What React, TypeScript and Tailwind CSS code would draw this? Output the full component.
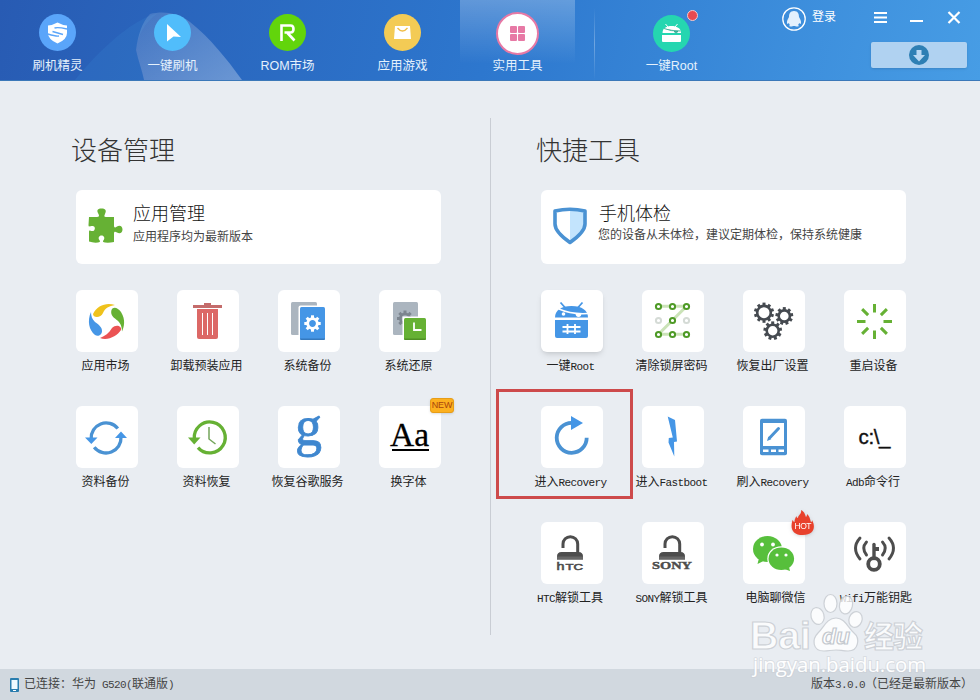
import type { ReactNode } from "react";

type Tool = {
  label: string;
  icon: ReactNode;
  shift?: string;
  raised?: boolean;
  extra?: ReactNode;
};

const BLUE = "#4596e6";
const STEEL = "#4a92d3";
const GREEN = "#66b134";
const DARK = "#4d4d4d";

// Latin runs are set on a 6px half-width grid next to the 12px CJK glyphs
const Mixed = ({ text }: { text: string }) => (
  <>
    {text.split(/([\x20-\x7e]+)/).map((part, i) =>
      i % 2 ? (
        <span key={i} className="font-['Liberation_Mono',monospace] text-[11px] tracking-[-0.6px] whitespace-pre">{part}</span>
      ) : (
        <span key={i}>{part}</span>
      )
    )}
  </>
);

const Gear = ({ cx, cy, r, w, color, teeth = 8 }: { cx: number; cy: number; r: number; w: number; color: string; teeth?: number }) => (
  <g transform={`translate(${cx} ${cy})`} fill={color}>
    <circle r={r} fill="none" stroke={color} strokeWidth={w} />
    {Array.from({ length: teeth }, (_, i) => (
      <rect key={i} x={-1.5} y={-r - w / 2 - 2} width={3} height={3} transform={`rotate(${(360 / teeth) * i})`} />
    ))}
  </g>
);

const Icon = ({ children }: { children: ReactNode }) => (
  <svg viewBox="0 0 62 62" className="block h-[62px] w-[62px] overflow-visible" fill="none">
    {children}
  </svg>
);

const Lock = ({ x }: { x: number }) => (
  <g transform={`translate(${x} 0)`}>
    <path d="M22 26v-4a7.3 7.3 0 0 1 14.7 0v9" stroke={DARK} strokeWidth="3" />
    <path d="M16 37.500v-3q0-4.500 4.500-4.500h17q4.500 0 4.500 4.500v3z" fill={DARK} />
    <path d="M16 34.500h26v3h-26z" fill="#666" />
  </g>
);

const deviceTools: Tool[] = [
  {
    label: "应用市场",
    icon: (
      <Icon>
        <path d="M39 15C31 12 21 15 17 24c0 4 8 4 10-1 2-5 6-7 12-8z" fill="#efc21c" />
        <path d="M35.500 20c1.500-4 6.500-2.500 9.500 2 5 8 3 15 1 19.500 0-7-3-10-7-13-3-2-4.500-5-3.500-8.500z" fill={GREEN} />
        <path d="M15 22c-4 9-2 18 4 23 3 2 7 0 7-4s-3-6-7-9c-3-3-4-6-4-10z" fill={BLUE} />
        <path d="M24 48c8 3 17-2 21-8 1-4-5-6-9-2-3 5-7 8-12 10z" fill="#eb5354" />
      </Icon>
    ),
  },
  {
    label: "卸载预装应用",
    icon: (
      <Icon>
        <path d="M16 15h11v-2h7v2h11v3h-29z" fill="#c46c6b" />
        <path d="M20 19h21v28q0 2-2 2h-17q-2 0-2-2z" fill="#dc6866" />
        <path d="M25.500 23v22M30.500 23v22M35.500 23v22" stroke="#fff" strokeWidth="1" />
      </Icon>
    ),
  },
  {
    label: "系统备份",
    icon: (
      <Icon>
        <rect x="13" y="12" width="26" height="33" rx="1.500" fill="#abb5bf" />
        <rect x="20.500" y="15.500" width="28" height="36" rx="2" fill="#fff" />
        <rect x="22" y="17" width="25" height="33" rx="1.500" fill={BLUE} />
        <path d="M22 48.500h25q0 1.500-1.500 1.500h-22q-1.500 0-1.500-1.500z" fill="#3579bd" />
        <Gear cx={34.5} cy={33.5} r={4.8} w={2.8} color="#fff" />
      </Icon>
    ),
  },
  {
    label: "系统还原",
    icon: (
      <Icon>
        <rect x="14" y="12" width="25" height="33" rx="1.500" fill="#abb5bf" />
        <Gear cx={26} cy={28.5} r={4.6} w={2.8} color="#7c858f" />
        <rect x="23.500" y="26.500" width="26" height="25" fill="#fff" />
        <rect x="25" y="28" width="22" height="22" rx="1.500" fill={GREEN} />
        <path d="M25 48.500h22q0 1.500-1.500 1.500h-19q-1.500 0-1.500-1.500z" fill="#4f8f25" />
        <path d="M35 32.500v7.500h7.500" stroke="#fff" strokeWidth="1.800" />
      </Icon>
    ),
  },
  {
    label: "资料备份",
    icon: (
      <Icon>
        <path d="M15.200 33a15 15 0 0 1 26.600-10.500M45 31a15 15 0 0 1-26.800 10.200" stroke={STEEL} strokeWidth="3.300" />
        <path d="M9 31.500h12.500l-6.200 6.500zM39 32h12l-6-6.500z" fill={BLUE} />
      </Icon>
    ),
  },
  {
    label: "资料恢复",
    icon: (
      <Icon>
        <path d="M17.300 33a15.500 15.500 0 1 1 3.700 8.600" stroke={GREEN} strokeWidth="3.300" />
        <path d="M11 31.500h12.500l-6.300 7z" fill={GREEN} />
        <path d="M32 21v12l6.500 5" stroke="#74a55b" strokeWidth="1.500" />
      </Icon>
    ),
  },
  {
    label: "恢复谷歌服务",
    icon: (
      <Icon>
        <text x="17" y="39" fontSize="56" textLength="27" lengthAdjust="spacingAndGlyphs" fill="#3f87cf" stroke="#3f87cf" strokeWidth="0.800" fontFamily="Liberation Serif, serif">g</text>
      </Icon>
    ),
  },
  {
    label: "换字体",
    icon: (
      <Icon>
        <text x="11" y="39.500" fontSize="34" textLength="39" lengthAdjust="spacingAndGlyphs" fill="#000" stroke="#000" strokeWidth="0.300" fontFamily="Liberation Serif, serif">Aa</text>
        <path d="M13 44h37" stroke="#000" strokeWidth="2" />
      </Icon>
    ),
    extra: (
      <span className="absolute -top-2 left-[51px] flex h-[15px] w-6 items-center justify-center rounded-[3px] border border-[#e79d17] bg-[#fcb01f] font-['Liberation_Sans',sans-serif] text-[9px] leading-none tracking-tight text-[#a8440c] shadow">
        NEW
      </span>
    ),
  },
];

const quickTools: Tool[] = [
  {
    label: "一键Root",
    raised: true,
    icon: (
      <Icon>
        <path d="M19.500 12.500l4.500 5M41.500 12.500l-4.500 5" stroke={BLUE} strokeWidth="1.800" />
        <path d="M14 27.500c0-7 6-11.500 16.500-11.500s16.500 4.500 16.500 11.500z" fill={BLUE} />
        <path d="M18 19q12 5.500 29 4.500" stroke="#fff" strokeWidth="1.500" />
        <path d="M34.500 23h6q0 4-3 4t-3-4z" fill="#fff" />
        <circle cx="22.500" cy="24" r="1.800" fill="#fff" />
        <path d="M14 30h33v16q0 2-2 2h-29q-2 0-2-2z" fill={BLUE} />
        <path d="M26.500 34v10M34 34v10M21.500 37h18M21.500 41.500h18" stroke="#fff" strokeWidth="1.800" />
      </Icon>
    ),
  },
  {
    label: "清除锁屏密码",
    icon: (
      <Icon>
        <path d="M16.500 16.300h28l-28 28h28" stroke="#cbe3b8" strokeWidth="3" />
        {[16.5, 30.5, 44.5].map((y) =>
          [16.5, 30.5, 44.5].map((x) => (
            <circle key={`${x}-${y}`} cx={x} cy={y} r="2.600" fill="#fff" stroke={y === 30.5 && x !== 30.5 ? "#d5dbd6" : "#4e9a26"} strokeWidth="2" />
          ))
        )}
      </Icon>
    ),
  },
  {
    label: "恢复出厂设置",
    icon: (
      <Icon>
        <Gear cx={21} cy={22.7} r={6.8} w={2.6} color="#454a50" teeth={10} />
        <Gear cx={41.3} cy={26} r={5.6} w={2.6} color="#454a50" teeth={9} />
        <Gear cx={29.7} cy={40.7} r={6} w={2.6} color="#454a50" teeth={9} />
      </Icon>
    ),
  },
  {
    label: "重启设备",
    icon: (
      <Icon>
        {[0, 45, 90, 135, 180, 225, 270, 315].map((deg) => (
          <rect key={deg} x="29" y="14" width="3" height="8.500" fill={GREEN} transform={`rotate(${deg} 30.500 31.500)`} />
        ))}
      </Icon>
    ),
  },
  {
    label: "进入Recovery",
    icon: (
      <Icon>
        <path d="M31 16.800a15 15 0 1 0 14.700 15" stroke={STEEL} strokeWidth="3.800" />
        <path d="M30 10l12 7-12 7z" fill={BLUE} />
      </Icon>
    ),
    // red frame around the step to press
    extra: <span className="absolute -top-[17px] -left-[45px] h-[110px] w-[137px] border-3 border-[#cd4a4b]" />,
  },
  {
    label: "进入Fastboot",
    icon: (
      <Icon>
        <path d="M25.700 10.500l7.300 3.500 2 21.500-3 .5.300 14.500-5.800-14 .300-4.500 4-.500z" fill={BLUE} />
      </Icon>
    ),
  },
  {
    label: "刷入Recovery",
    icon: (
      <Icon>
        <rect x="17" y="12.700" width="27" height="36.500" rx="2" fill={STEEL} />
        <path d="M20 17h21v23h-21z" fill="#fff" />
        <path d="M20 43.500h5.500v2.500h-5.500zM28 43.500h5v2.500h-5zM35.500 43.500h5.500v2.500h-5.500z" fill="#fff" />
        <path d="M27 31.500l8.500-9" stroke={STEEL} strokeWidth="3" strokeLinecap="round" />
        <path d="M24 35l1.300-4.500 3 2.800z" fill={STEEL} />
      </Icon>
    ),
  },
  {
    label: "Adb命令行",
    shift: "mr-[4px]",
    icon: (
      <Icon>
        <text x="14.500" y="38" fontSize="20.500" textLength="32" fill="#111" stroke="#111" strokeWidth="0.400" fontFamily="Liberation Sans, sans-serif">c:\_</text>
      </Icon>
    ),
  },
  {
    label: "HTC解锁工具",
    shift: "mr-[4px]",
    icon: (
      <Icon>
        <Lock x={0} />
        <g fill={DARK} stroke={DARK} strokeWidth="0.600" fontFamily="Liberation Sans, sans-serif">
          <text x="15.500" y="48" fontSize="11.500" textLength="8" lengthAdjust="spacingAndGlyphs">h</text>
          <text x="24.500" y="48" fontSize="9.500" textLength="17.500" lengthAdjust="spacingAndGlyphs">TC</text>
        </g>
      </Icon>
    ),
  },
  {
    label: "SONY解锁工具",
    icon: (
      <Icon>
        <Lock x={1} />
        <text x="10" y="47" fontSize="10.500" textLength="40" lengthAdjust="spacingAndGlyphs" fontWeight="bold" fill={DARK} stroke={DARK} strokeWidth="0.400" fontFamily="Liberation Serif, serif">SONY</text>
      </Icon>
    ),
  },
  {
    label: "电脑聊微信",
    shift: "ml-[3px]",
    icon: (
      <Icon>
        <ellipse cx="24.500" cy="27" rx="14.500" ry="13" fill="#57bf3c" />
        <path d="M16 36l-1.500 6 7-3.500z" fill="#57bf3c" />
        <ellipse cx="38.300" cy="36.700" rx="14" ry="12.500" fill="#fff" />
        <ellipse cx="38.300" cy="36.700" rx="12.800" ry="11.300" fill="#57bf3c" />
        <path d="M40 46.500l7 2.500-1.500-6z" fill="#57bf3c" />
        <g fill="#fff">
          <circle cx="19" cy="22.500" r="1.900" />
          <circle cx="30" cy="22.500" r="1.900" />
          <circle cx="34" cy="33" r="1.600" />
          <circle cx="43" cy="33" r="1.600" />
        </g>
      </Icon>
    ),
    extra: (
      <span className="absolute -top-3 left-12 h-[26px] w-6 drop-shadow">
        <svg viewBox="0 0 24 26" className="block h-[26px] w-6">
          <path d="M10 0c4 2 4 5 5 7 1-1 1-2 1-3 3 3 3 5 4 8 1 0 1-1 1-2 4 7 2 15-9 15S-1 18 1.500 10c1 1 1 2 2 2 0-3 1-4 2-6 0 1 .5 2 1.500 2C7 5 11 4 10 0z" fill="#e8412c" />
          <text x="12" y="19" fontSize="8.500" textAnchor="middle" textLength="17" fill="#fff" fontFamily="Liberation Sans, sans-serif">HOT</text>
        </svg>
      </span>
    ),
  },
  {
    label: "Wifi万能钥匙",
    shift: "ml-[2px]",
    icon: (
      <Icon>
        <g stroke={DARK} strokeLinecap="round">
          <circle cx="30" cy="42" r="5.800" strokeWidth="3.800" />
          <path d="M30 22.500v14" strokeWidth="3.400" />
          <path d="M31 27h4" strokeWidth="4" strokeLinecap="butt" />
          <path d="M22.500 20q-5.500 6 0 13M38.500 20q5.500 6 0 13M16 16q-9 10 0 21M45 16q9 10 0 21" strokeWidth="2.900" />
        </g>
      </Icon>
    ),
  },
];

const navItems = [
  {
    label: "刷机精灵",
    color: "bg-[#5aa5fa]",
    icon: (
      <>
        <path d="M9 11.500q5-.5 9.500-3 4.500 2.500 9.500 3v7.500q0 6.500-9.500 10.500-9.500-4-9.500-10.500z" fill="#fff" />
        <path d="M28 15q-9-2-12.500-1M13.500 17.500l10.500 3M9 20q8 2.500 11 2" fill="none" stroke="#5aa5fa" strokeWidth="1.400" />
      </>
    ),
  },
  { label: "一键刷机", color: "bg-[#51bdfb]", icon: <path d="M13 10l14 13-7.500-.5-6.500 5z" fill="#fff" /> },
  {
    label: "ROM市场",
    color: "bg-[#62d50b]",
    icon: <path d="M12.500 27v-15.500h9q3 0 3 3.500t-3 3.500h-6M18.500 19l7 7.500" fill="none" stroke="#fff" strokeWidth="2.600" />,
  },
  {
    label: "应用游戏",
    color: "bg-[#f3cb55]",
    icon: (
      <>
        <path d="M11 12h15l1 13h-17z" fill="#fff" />
        <path d="M13.500 14q5 6 10 0" fill="none" stroke="#f0bd45" strokeWidth="1.300" />
      </>
    ),
  },
];

const ToolTile = ({ tool }: { tool: Tool }) => (
  <div className="relative flex h-[116px] w-[62px] flex-col items-center">
    <div className={tool.raised ? "rounded-md bg-white shadow-md" : "rounded-md bg-white"}>{tool.icon}</div>
    <span className={`mt-1.5 h-4 text-xs leading-4 whitespace-nowrap text-[#222] ${tool.shift ?? "mr-[3px]"}`}>
      <Mixed text={tool.label} />
    </span>
    {tool.extra}
  </div>
);

const ToolSection = ({ title, card, tools }: { title: string; card: ReactNode; tools: Tool[] }) => (
  <section className="w-[365px]">
    <h2 className="-ml-[5px] h-10 text-[26px] leading-10 font-light text-[#333]">{title}</h2>
    <div className="mt-[19px] flex h-[74px] rounded-md bg-white">{card}</div>
    <div className="mt-[26px] grid grid-cols-[repeat(4,62px)] gap-x-[39px]">
      {tools.map((tool) => (
        <ToolTile key={tool.label} tool={tool} />
      ))}
    </div>
  </section>
);

const Watermark = () => (
  <svg viewBox="0 0 190 90" className="pointer-events-none absolute top-[590px] left-[745px] h-[90px] w-[190px]">
    <g fill="#fff" fillOpacity="0.800" stroke="#c9cdd3" strokeWidth="1.200" strokeOpacity="0.900">
      <text x="5" y="59" fontSize="39" fontWeight="bold" textLength="61" lengthAdjust="spacingAndGlyphs" fontFamily="Liberation Sans, sans-serif">Bai</text>
      <ellipse cx="72.500" cy="26" rx="6.500" ry="8.500" transform="rotate(-15 72.500 26)" />
      <ellipse cx="85.500" cy="13.500" rx="6.500" ry="9" />
      <ellipse cx="101" cy="15" rx="6.500" ry="9" transform="rotate(12 101 15)" />
      <ellipse cx="110.500" cy="29.500" rx="6.500" ry="8" transform="rotate(20 110.500 29.500)" />
      <path d="M91 28c9 0 12 10 18 15s5 18-6 18c-5 0-8-1-12-1s-8 1-12 1c-12 0-12-12-6-18s9-15 18-15z" />
      <text x="119" y="57" fontSize="30" fontWeight="bold" textLength="59" fontFamily="Noto Sans CJK SC, sans-serif">经验</text>
    </g>
    <text x="77" y="54" fontSize="22" fontWeight="bold" fontStyle="italic" textLength="28" lengthAdjust="spacingAndGlyphs" fill="#fff" stroke="#c3c8ce" strokeWidth="1.200" fontFamily="Liberation Sans, sans-serif">du</text>
    <text x="8" y="82" fontSize="20.500" textLength="173" lengthAdjust="spacingAndGlyphs" fill="#fff" stroke="#c9cdd3" strokeWidth="2" strokeOpacity="0.500" paintOrder="stroke" fontFamily="Open Sans, sans-serif">jingyan.baidu.com</text>
  </svg>
);

const App = () => {
  return (
    <div className="relative flex h-[700px] w-[980px] flex-col overflow-hidden bg-[#e9edf2] font-['Liberation_Sans','Noto_Sans_CJK_SC',sans-serif]">
      <header className="relative flex h-[81px] shrink-0 border-b border-[#3b78b9] bg-linear-[105deg] from-[#285bb3] via-[#2d77ce] to-[#479de5]">
        <svg viewBox="0 0 180 80" className="absolute top-0 left-[70px] h-20 w-[180px]">
          <defs>
            <linearGradient id="hill" x1="0" y1="0" x2="1" y2="1">
              <stop offset="0" stopColor="#fff" stopOpacity="0.120" />
              <stop offset="1" stopColor="#fff" stopOpacity="0.300" />
            </linearGradient>
          </defs>
          <path d="M5 80C25 55 60 20 88 13c-14 10-20 22-22 37 2 10 6 20 8 30z" fill="#3d8ad8" fillOpacity="0.200" />
          <path d="M74 80c-2-10-6-20-8-30 2-15 6-28 14-36 12-3 27-2 40 8 20 16 37 37 52 58z" fill="url(#hill)" />
        </svg>
        <nav className="relative flex text-[12.5px] leading-4 text-[#e5f1fc]">
          {navItems.map((item) => (
            <div key={item.label} className="flex w-[115px] flex-col items-center pt-3.5">
              <div className={`h-[37px] w-[37px] rounded-full ${item.color}`}>
                <svg viewBox="0 0 37 37" className="block h-[37px] w-[37px]">{item.icon}</svg>
              </div>
              <span className="mt-[7px]">{item.label}</span>
            </div>
          ))}
          <div className="flex w-[115px] flex-col items-center bg-linear-to-b from-white/25 to-white/0 to-80% pt-3">
            <div className="grid h-[43px] w-[43px] place-content-center rounded-full border-2 border-[#e779a5] bg-white">
              <div className="grid grid-cols-2 gap-px">
                {[0, 1, 2, 3].map((n) => (
                  <i key={n} className="h-[7px] w-[7px] rounded-[1px] bg-[#e779a5]" />
                ))}
              </div>
            </div>
            <span className="mt-[3px]">实用工具</span>
          </div>
          <div className="mt-2 ml-[19px] h-[72px] w-px bg-linear-to-b from-white/0 via-white/30 to-white/0" />
          <div className="ml-[19px] flex w-[115px] flex-col items-center pt-[15px]">
            <div className="relative h-[37px] w-[37px] rounded-full bg-[#25d6b0]">
              <svg viewBox="0 0 37 37" className="block h-[37px] w-[37px]">
                <path d="M12.500 9l2.500 3M24.500 9l-2.500 3" stroke="#fff" strokeWidth="1" />
                <path d="M9.500 18c0-5 4-7 9-7s9.500 2 9.500 7z" fill="#fff" />
                <path d="M11 13.500q7 3 16.500 2.500M21 16.500h4l-2 1.500z" stroke="#25a58b" strokeWidth="0.800" fill="#25a58b" fillOpacity="0.500" />
                <path d="M9 20h19v6q0 1-1 1h-17q-1 0-1-1z" fill="#fff" />
              </svg>
              <span className="absolute -top-[5px] -right-2 h-[11px] w-[11px] rounded-full border border-[#f6c9cb] bg-[#e84a50]" />
            </div>
            <span className="mt-1.5">一键Root</span>
          </div>
        </nav>
        <div className="ml-auto flex w-[198px] flex-col items-end pr-[13px]">
          <div className="flex h-[42px] w-full items-start pt-[7px] text-white">
            <svg viewBox="0 0 24 24" className="h-6 w-6">
              <circle cx="12" cy="12" r="11.200" fill="none" stroke="#fff" strokeWidth="1.300" />
              <path d="M12 4c4 0 5 3 5 6 1 2 2.500 4 2 6.500-.5 1-1.500-.5-2-.5 0 1-.5 1.500-1 2 1 .5 1.500 1.500-.5 1.500-1.500 0-2.500-.5-3.500-.5s-2 .5-3.500.5c-2 0-1.500-1-.5-1.500-.5-.5-1-1-1-2-.5 0-1.500 1.500-2 .5-.5-2.500 1-4.500 2-6.500 0-3 1-6 5-6z" fill="#e3f0fd" />
            </svg>
            <span className="ml-1.5 w-[62px] pt-px text-xs leading-[19px]">登录</span>
            <svg viewBox="0 0 88 16" className="mt-1 h-4 w-[88px]" fill="none" stroke="#fff" strokeWidth="2">
              <path d="M0 2h13M0 6.500h13M0 11h13M36 10h13" />
              <path d="M74.500 1l11 11M85.500 1l-11 11" strokeWidth="2.200" />
            </svg>
          </div>
          <button className="grid h-[26px] w-24 place-items-center rounded-[2px] bg-[#b0d2f1] shadow-sm">
            <svg viewBox="0 0 20 20" className="h-5 w-5">
              <circle cx="10" cy="10" r="10" fill="#2e7fb4" />
              <path d="M7.500 5h5v5h3.500l-6 6.500-6-6.500h3.500z" fill="#b9d8f3" />
            </svg>
          </button>
        </div>
      </header>

      <main className="flex flex-1 pl-[76px]">
        <div className="w-[414px] pt-[50px]">
          <ToolSection
            title="设备管理"
            tools={deviceTools}
            card={
              <>
                <svg viewBox="0 0 36 36" className="mt-[18px] ml-[11px] h-9 w-9">
                  <path d="M2 9h8q3 0 1.500-3C9 2 11 .5 14.500.5S20 2 18 6c-1.500 3 0 3 2 3h7v8c0 3 1 3 3 1.500 3-2 5.500 0 5.500 3s-2.500 5-5.500 3c-2-1.500-3-1-3 1v8.500q-5 1-9 .500c-3-.5-2-1.500-1-3 1-2-.5-4-2.500-4s-3.500 2-2.500 4c1 1.500 2 2.500-1 3q-5 .5-9-1V24c0-2 1-1.500 2.500-1 4 1 5-6 0-5-1.500.5-3 1-3-1z" fill={GREEN} />
                </svg>
                <div className="ml-2.5 pt-3">
                  <h3 className="text-lg leading-6 font-light text-[#111]">应用管理</h3>
                  <p className="mt-[3px] text-xs leading-4 text-[#444]">应用程序均为最新版本</p>
                </div>
              </>
            }
          />
        </div>
        <div className="mt-[37px] h-[517px] w-px bg-[#c9cdd4]" />
        <div className="ml-[50px] pt-[50px]">
          <ToolSection
            title="快捷工具"
            tools={quickTools}
            card={
              <>
                <svg viewBox="0 0 36 38" className="mt-[17px] ml-[11px] h-[38px] w-9">
                  <path d="M3 4q15-3.500 30 0v13q0 8-15 18.500-15-10.500-15-18.500z" fill="#fff" />
                  <path d="M18 3q8 0 15 1v13q0 8-15 18.500z" fill="#c3e4fd" />
                  <path d="M3 4q15-3.500 30 0v13q0 8-15 18.500-15-10.500-15-18.500z" fill="none" stroke={STEEL} strokeWidth="3.600" strokeLinejoin="round" />
                </svg>
                <div className="ml-2.5 pt-3">
                  <h3 className="ml-px text-lg leading-6 font-light text-[#111]">手机体检</h3>
                  <p className="mt-px text-xs leading-4 whitespace-nowrap text-[#444]">您的设备从未体检，建议定期体检，保持系统健康</p>
                </div>
              </>
            }
          />
        </div>
      </main>

      <footer className="flex h-[31px] shrink-0 items-center justify-between bg-[#d1d8df] pr-[7px] pl-2.5 text-xs leading-4 text-[#444]">
        <div className="flex items-center">
          <svg viewBox="0 0 9 14" className="mr-[5px] h-3.5 w-[9px]">
            <rect width="9" height="14" rx="1" fill="#2a7dae" />
            <path d="M1.500 2h6v9h-6z" fill="#effaff" />
            <path d="M3 12.500h3" stroke="#fff" />
          </svg>
          <span><Mixed text="已连接：华为 G520(联通版)" /></span>
        </div>
        <span><Mixed text="版本3.0.0（已经是最新版本）" /></span>
      </footer>
      <Watermark />
    </div>
  );
};

export default App;
